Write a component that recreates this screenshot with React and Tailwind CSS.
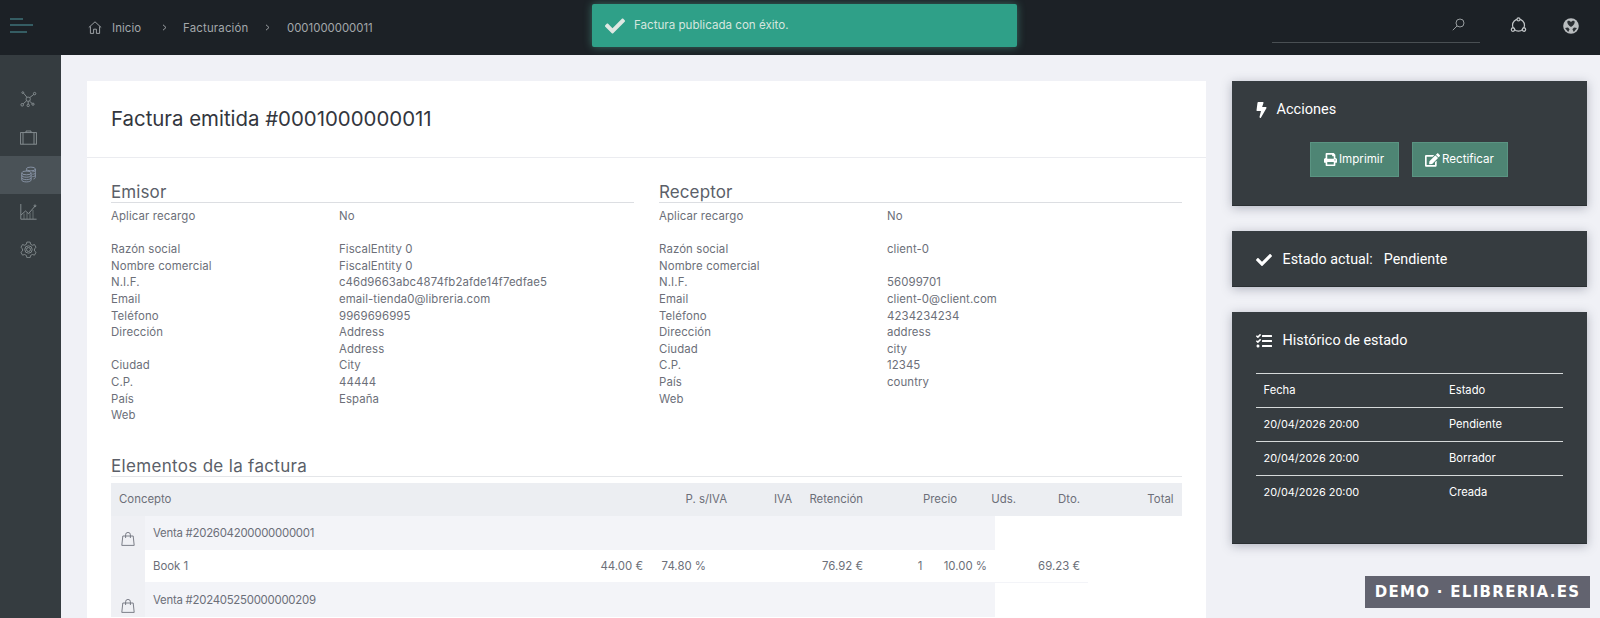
import React from 'react';
import { FaBolt, FaPrint, FaEdit, FaCheck, FaTasks } from 'react-icons/fa';

const Menu = () => (
  <svg width="24" height="16" viewBox="0 0 24 16" fill="none" stroke="#4f9aa0" strokeWidth="1.2">
    <path d="M0 1H13M0 7H23M0 14H17" />
  </svg>
);
const Home = () => (
  <svg width="14" height="13" viewBox="0 0 14 13" fill="none" stroke="#a8adb0" strokeWidth="0.9">
    <path d="M.8 6.5 7 .8l6.2 5.7M2.4 5.4V12.4H5.6V8.2H8.4V12.4H11.6V5.4" />
  </svg>
);
const Chevron = () => (
  <svg width="5" height="7" viewBox="0 0 5 7" fill="none" stroke="#a8adb0" strokeWidth="0.9"><path d="M1 .8 4 3.5 1 6.2" /></svg>
);
const Search = () => (
  <svg width="13" height="13" viewBox="0 0 13 13" fill="none" stroke="#a5aaad" strokeWidth="0.9">
    <circle cx="8" cy="5" r="4" /><path d="M5 8 .8 12.2" />
  </svg>
);
const Nodes = () => (
  <svg width="17" height="17" viewBox="0 0 17 17" fill="none" stroke="#c2c6c8" strokeWidth="1.2">
    <circle cx="8.5" cy="8.2" r="6" />
    <g fill="#1c2126">
      <circle cx="8.5" cy="2.4" r="1.5" /><circle cx="3" cy="12.6" r="1.7" /><circle cx="14" cy="12.6" r="1.7" />
    </g>
  </svg>
);
const Globe = () => (
  <svg width="16" height="16" viewBox="0 0 16 16">
    <circle cx="8" cy="8" r="7.8" fill="#b9bdbf" />
    <path d="M4.4 3.2C6 2.2 7 3 8 4c1-1 2-1.8 3.6-.8.6 2-1 4.4-3.6 5.8C5.4 7.6 3.8 5.2 4.4 3.2z" fill="#2a2f33" />
    <path d="M2 10l3-.6 1.6 1.8-1.4 2.8zM14 10l-3-.6-1.6 1.8 1.4 2.8z" fill="#2a2f33" />
  </svg>
);
const Network = () => (
  <svg width="17" height="17" viewBox="0 0 17 17" fill="none" stroke="#8b9396" strokeWidth="0.9">
    <rect x="6.2" y="6.2" width="4" height="4" rx="1.4" />
    <path d="M7 6.4 3.6 2.2M10 6.4 13.8 3.4M6.6 9.8 3.2 12.8M9.6 10.2 12 12.4M8.2 10.2V13" />
    <circle cx="2.8" cy="1.6" r=".9" /><circle cx="14.6" cy="2.6" r="1.2" /><circle cx="2.2" cy="13.8" r="1.3" /><circle cx="8.2" cy="14.4" r="1.2" /><circle cx="13" cy="13.2" r="1.1" />
  </svg>
);
const Briefcase = () => (
  <svg width="17" height="15" viewBox="0 0 17 15" fill="none" stroke="#8b9396" strokeWidth="0.9">
    <rect x=".6" y="2.6" width="15.8" height="11.6" /><path d="M3 2.6V14.2M14 2.6V14.2M6 2.6V1H11V2.6" />
  </svg>
);
const Coins = () => (
  <svg width="15" height="17" viewBox="0 0 16 17" fill="none" stroke="#8f9bb0" strokeWidth="0.9">
    <ellipse cx="10.5" cy="2.6" rx="4.8" ry="2" />
    <path d="M15.3 2.6V11.5c0 1-1 1.6-2 1.8M5.7 3.4V5" />
    <path d="M12 5.6c1.6 0 3.3-.5 3.3-1.4M12 8.2c1.6 0 3.3-.5 3.3-1.4M12 10.8c1.6 0 3.3-.5 3.3-1.4" />
    <ellipse cx="5.8" cy="6.8" rx="5" ry="2" />
    <path d="M.8 6.8V14.4c0 1.1 2.2 2 5 2s5-.9 5-2V6.8M.8 9.4c0 1.1 2.2 2 5 2s5-.9 5-2M.8 12c0 1.1 2.2 2 5 2s5-.9 5-2" />
  </svg>
);
const Chart = () => (
  <svg width="17" height="16" viewBox="0 0 17 16" fill="none" stroke="#8b9396" strokeWidth="0.9">
    <path d="M.8 0V15.2H16.6M1 11 5.5 7l3 2.6L15 2.2" />
    <path d="M4 9.6V15M7 9V15M10 8.6V15M13 6V15" strokeWidth=".6" />
    <circle cx="15" cy="1.8" r=".9" />
  </svg>
);
const Gear = () => (
  <svg width="17" height="17" viewBox="0 0 24 24" fill="none" stroke="#8b9396" strokeWidth="1.2">
    <path d="M9.7 1.5h4.6l.6 3 2.6 1.5 2.9-1 2.3 4-2.3 2v3l2.3 2-2.3 4-2.9-1-2.6 1.5-.6 3H9.7l-.6-3-2.6-1.5-2.9 1-2.3-4 2.3-2v-3l-2.3-2 2.3-4 2.9 1 2.6-1.5z" />
    <circle cx="12" cy="12" r="5.2" /><circle cx="12" cy="12" r="2.8" />
  </svg>
);
const Bag = () => (
  <svg width="14" height="14" viewBox="0 0 14 14" fill="none" stroke="#6f737d" strokeWidth="0.9">
    <path d="M1.8 4H12.2L13.2 13.4H.8zM4.6 6V2.8a2.4 2.4 0 0 1 4.8 0V6" />
  </svg>
);

const emisor = [
  ['Aplicar recargo', 'No'], ['', ''], ['Razón social', 'FiscalEntity 0'], ['Nombre comercial', 'FiscalEntity 0'],
  ['N.I.F.', 'c46d9663abc4874fb2afde14f7edfae5'], ['Email', 'email-tienda0@libreria.com'], ['Teléfono', '9969696995'],
  ['Dirección', 'Address'], ['', 'Address'], ['Ciudad', 'City'], ['C.P.', '44444'], ['País', 'España'], ['Web', ''],
];
const receptor = [
  ['Aplicar recargo', 'No'], ['', ''], ['Razón social', 'client-0'], ['Nombre comercial', ''],
  ['N.I.F.', '56099701'], ['Email', 'client-0@client.com'], ['Teléfono', '4234234234'],
  ['Dirección', 'address'], ['Ciudad', 'city'], ['C.P.', '12345'], ['País', 'country'], ['Web', ''],
];

function Party({ title, rows }) {
  return (
    <div className="w-[523px]">
      <h3 className="h-[22px] border-b border-[#dcdee2] text-[17px] leading-[22px] tracking-[0.1px] text-[#5b5f69]">{title}</h3>
      <div className="mt-[5px]">
        {rows.map((r, i) => (
          <div key={i} className="flex h-[16.6px] text-[11.4px] leading-[16.6px] text-[#6c6f79]">
            <div className="w-[228px] tracking-[0.12px]">{r[0]}</div>
            <div className="tracking-[0.1px]">{r[1]}</div>
          </div>
        ))}
      </div>
    </div>
  );
}

const headCols = [['P. s/IVA', 65], ['IVA', 65], ['Retención', 71], ['Precio', 94], ['Uds.', 59], ['Dto.', 64], ['Total', 93.6]];
const bookCols = [['44.00 €', 63], ['74.80 %', 63], ['76.92 €', 157], ['1', 59.5], ['10.00 %', 64.5], ['69.23 €', 93]];

function Sale({ title, last }) {
  return (
    <div className="flex">
      <div className="flex w-[34px] justify-center bg-[#eff0f4] pt-[16px]"><Bag /></div>
      <div className="flex flex-col">
        <div className="flex h-[34px] w-[850px] items-center bg-[#f3f4f8] pl-[8px] pt-[2px] tracking-[-0.25px]">{title}</div>
        {!last && (
          <div className="flex h-[33px] w-[943px] items-center border-b border-[#f3f4f8] pt-[2px]">
            <div className="w-[443px] pl-[8px]">Book 1</div>
            {bookCols.map(([t, w]) => (
              <div key={t} style={{ width: w }} className="pr-[8px] text-right">{t}</div>
            ))}
          </div>
        )}
      </div>
    </div>
  );
}

function SideCard({ className, children }) {
  return <div className={`w-[355px] border-b border-[#2a2f32] bg-[#363c40] text-white shadow-[0_2px_10px_rgba(60,65,90,0.35)] ${className}`}>{children}</div>;
}

const history = [['Fecha', 'Estado'], ['20/04/2026 20:00', 'Pendiente'], ['20/04/2026 20:00', 'Borrador'], ['20/04/2026 20:00', 'Creada']];

export default function App() {
  return (
    <div className="relative flex h-[618px] w-[1600px] flex-col overflow-hidden bg-[#f0f1f6] font-['Inter',sans-serif]">
      <header className="flex h-[55px] shrink-0 items-center bg-[#1c2126] text-[11.4px] text-[#a3a8ab]">
        <div className="ml-[10px] mt-[-4px] w-[78px]"><Menu /></div>
        <Home />
        <span className="ml-[10px] mt-[3px] w-[50px] tracking-[0.1px]">Inicio</span>
        <Chevron />
        <span className="ml-[16px] mt-[3px] w-[82px] tracking-[0.2px]">Facturación</span>
        <Chevron />
        <span className="ml-[17px] mt-[3px]">0001000000011</span>
        <div className="ml-auto flex items-center">
          <div className="mt-[-6px] flex h-[36px] w-[208px] items-center justify-end border-b border-[#494f53] pr-[15px]"><Search /></div>
          <div className="ml-[30px] mt-[-4px]"><Nodes /></div>
          <div className="ml-[36px] mr-[21px] mt-[-4px]"><Globe /></div>
        </div>
      </header>
      <div className="flex min-h-0 flex-1">
        <aside className="flex w-[61px] shrink-0 flex-col bg-[#353c40] pt-[26px]">
          {[<Network />, <Briefcase />, <Coins />, <Chart />, <Gear />].map((ic, i) => (
            <div key={i} className={`flex h-[37.5px] items-center justify-center pr-[5px] ${i === 2 ? 'bg-[#4a5257]' : ''}`}>{ic}</div>
          ))}
        </aside>
        <main className="flex min-w-0 flex-1 items-start gap-[25.5px] pl-[26px] pt-[26px]">
          <section className="h-[600px] w-[1119px] shrink-0 bg-white text-[#6c6f79]">
            <div className="flex h-[77px] items-center border-b border-[#ebecf0] pl-[24px]">
              <h1 className="text-[20.4px] text-[#33363d]">Factura emitida #0001000000011</h1>
            </div>
            <div className="flex justify-between px-[24px] pt-[23px]">
              <Party title="Emisor" rows={emisor} />
              <Party title="Receptor" rows={receptor} />
            </div>
            <div className="mx-[24px] mt-[31px]">
              <h3 className="h-[22px] border-b border-[#e4e6e9] text-[17px] leading-[22px] tracking-[0.32px] text-[#5b5f69]">Elementos de la factura</h3>
              <div className="mt-[6px] flex h-[33px] items-center bg-[#eceef2] text-[11.4px]">
                <div className="w-[559px] pl-[8px]">Concepto</div>
                {headCols.map(([t, w]) => (
                  <div key={t} style={{ width: w }} className="pr-[8px] text-right">{t}</div>
                ))}
              </div>
              <div className="text-[11.4px]">
                <Sale title="Venta #202604200000000001" />
                <Sale title="Venta #202405250000000209" last />
              </div>
            </div>
          </section>
          <div className="flex flex-col gap-[25px] font-['Roboto',sans-serif]">
            <SideCard className="h-[125px]">
              <div className="flex h-[56px] items-center pl-[24px] pt-[2px] text-[14.5px]">
                <FaBolt className="h-[16px] w-[11px]" />
                <span className="ml-[10px]">Acciones</span>
              </div>
              <div className="flex gap-[13px] pl-[78px] pt-[5px] font-['Inter',sans-serif] text-[11.6px]">
                <button className="flex h-[35px] w-[89px] items-center justify-center gap-[2px] border border-[#5a9482] bg-[#4e8574]"><FaPrint className="h-[13px] w-[13px]" />Imprimir</button>
                <button className="flex h-[35px] w-[96px] items-center justify-center gap-[2px] border border-[#5a9482] bg-[#4e8574]"><FaEdit className="h-[14px] w-[15px]" />Rectificar</button>
              </div>
            </SideCard>
            <SideCard className="flex h-[56px] items-center pl-[24px] pt-[3px] text-[14.3px]">
              <FaCheck className="h-[16px] w-[16px]" />
              <span className="ml-[11px]">Estado actual:</span>
              <span className="ml-[11px]">Pendiente</span>
            </SideCard>
            <SideCard className="h-[232px]">
              <div className="flex h-[61px] items-center pb-[4px] pl-[24px] text-[14.4px]">
                <FaTasks className="h-[16px] w-[16px]" />
                <span className="ml-[11px]">Histórico de estado</span>
              </div>
              <div className="ml-[24px] w-[307px] font-['Inter',sans-serif] text-[11.2px]">
                {history.map(([a, b]) => (
                  <div key={a + b} className="flex h-[34px] items-center border-t border-[#d5d9d9] pl-[8px]">
                    <div className={`w-[185.5px] ${a === 'Fecha' ? '' : 'text-[10.9px]'}`}>{a}</div>
                    <div>{b}</div>
                  </div>
                ))}
              </div>
            </SideCard>
          </div>
        </main>
      </div>
      <div className="absolute left-[592px] top-[4px] flex h-[43px] w-[425px] items-center rounded-[2px] bg-[#2fa088] pl-[13px] text-[11.6px] text-[#d5e6df] shadow-[0_0_8px_rgba(90,200,170,0.45)]">
        <FaCheck className="h-[20px] w-[20px] text-[#dfe8e3]" />
        <span className="ml-[9px]">Factura publicada con éxito.</span>
      </div>
      <div className="absolute left-[1365px] top-[576px] flex h-[32px] w-[225px] items-center justify-center bg-[#62636f] font-['DejaVu_Sans',sans-serif] text-[15px] font-bold tracking-[1.3px] text-white">
        DEMO · ELIBRERIA.ES
      </div>
    </div>
  );
}
